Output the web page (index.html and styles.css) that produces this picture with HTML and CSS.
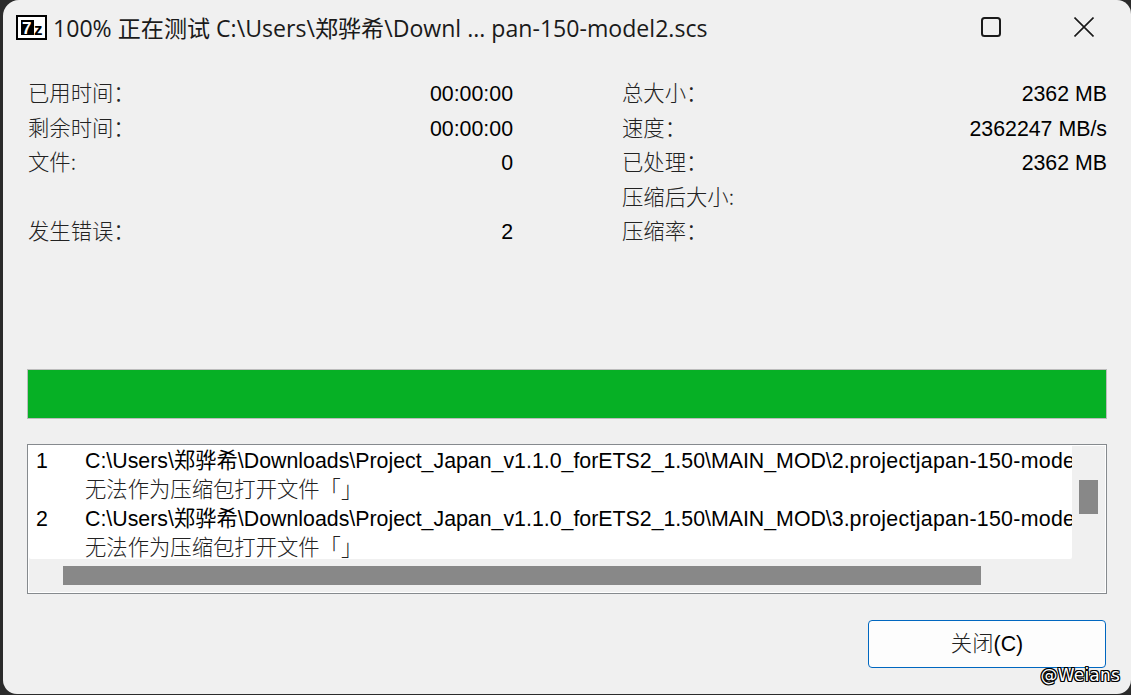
FILE: index.html
```html
<!DOCTYPE html>
<html lang="zh-CN">
<head>
<meta charset="utf-8">
<title>7-Zip</title>
<link rel="stylesheet" href="styles.css">
</head>
<body>
<div class="window">
  <header class="titlebar">
    <svg class="app-icon" width="32" height="26" viewBox="0 0 32 26">
      <rect x="0" y="0" width="31" height="25" fill="#000"/>
      <rect x="2" y="2" width="27" height="21" fill="#fff"/>
      <rect x="5" y="5" width="13" height="15" fill="#000"/>
      <text x="6" y="19" class="icon-seven">7</text>
      <text x="18" y="20" class="icon-z">z</text>
    </svg>
    <div class="title">100% 正在测试 C:\Users\郑骅希\Downl ... pan-150-model2.scs</div>
    <div class="controls">
      <svg class="control" width="20" height="20" viewBox="0 0 20 20"><rect x="1" y="1" width="18" height="18" rx="2.5" fill="none" stroke="#1a1a1a" stroke-width="2"/></svg>
      <svg class="control" width="20" height="20" viewBox="0 0 20 20"><path d="M0.5 0.5L19.5 19.5M19.5 0.5L0.5 19.5" fill="none" stroke="#1a1a1a" stroke-width="1.6"/></svg>
    </div>
  </header>
  <main class="content">
    <section class="stats">
      <div class="stat-col">
        <div class="stat"><span class="cjk">已用时间：</span><span>00:00:00</span></div>
        <div class="stat"><span class="cjk">剩余时间：</span><span>00:00:00</span></div>
        <div class="stat"><span class="cjk">文件:</span><span>0</span></div>
        <div class="stat"></div>
        <div class="stat"><span class="cjk">发生错误：</span><span>2</span></div>
      </div>
      <div class="stat-col">
        <div class="stat"><span class="cjk">总大小：</span><span>2362 MB</span></div>
        <div class="stat"><span class="cjk">速度：</span><span>2362247 MB/s</span></div>
        <div class="stat"><span class="cjk">已处理：</span><span>2362 MB</span></div>
        <div class="stat"><span class="cjk">压缩后大小:</span></div>
        <div class="stat"><span class="cjk">压缩率：</span></div>
      </div>
    </section>
    <div class="progress"><div class="progress-fill"></div></div>
    <section class="log">
      <div class="log-main">
        <div class="log-view">
          <div class="log-row"><span class="log-num">1</span><span class="log-text">C:\Users\郑骅希\Downloads\Project_Japan_v1.1.0_forETS2_1.50\MAIN_MOD\2.<span class="log-tail">projectjapan-150-model2.scs</span></span></div>
          <div class="log-row log-row-msg"><span class="log-num"></span><span class="log-text cjk">无法作为压缩包打开文件「」</span></div>
          <div class="log-row"><span class="log-num">2</span><span class="log-text">C:\Users\郑骅希\Downloads\Project_Japan_v1.1.0_forETS2_1.50\MAIN_MOD\3.<span class="log-tail">projectjapan-150-model2.scs</span></span></div>
          <div class="log-row log-row-msg"><span class="log-num"></span><span class="log-text cjk">无法作为压缩包打开文件「」</span></div>
        </div>
        <div class="vscroll"><div class="vthumb"></div></div>
      </div>
      <div class="hscroll"><div class="hthumb"></div></div>
    </section>
    <div class="actions"><button class="close-btn"><span class="cjk">关闭</span>(C)</button></div>
  </main>
  <div class="watermark">@Weians</div>
</div>
</body>
</html>
```

FILE: styles.css
```css
* { box-sizing: border-box; }
html, body { margin: 0; height: 100%; overflow: hidden; background: #2b2b2b; }
.window {
  position: relative;
  width: 1128px;
  height: 694px;
  margin-left: 3px;
  border-radius: 16px 14px 14px 14px;
  background: #f0f0f0;
  display: flex;
  flex-direction: column;
  font-family: "Liberation Sans", "Noto Sans CJK SC", sans-serif;
  font-size: 21.33px;
  line-height: 24px;
  color: #000;
  overflow: hidden;
}
.titlebar {
  height: 56px;
  display: flex;
  align-items: center;
  padding-left: 13px;
  flex: none;
}
.app-icon { flex: none; margin-right: 5px; }
.icon-seven { font: bold 17px "Liberation Sans", sans-serif; fill: #fff; }
.icon-z { font: bold 17px "Liberation Sans", sans-serif; fill: #000; }
.title {
  font-family: "Open Sans", "Noto Sans CJK SC", sans-serif;
  font-size: 23.1px;
  line-height: 30px;
  color: #1a1a1a;
  white-space: nowrap;
  flex: 1;
  margin-bottom: 1px;
}
.controls { display: flex; gap: 73px; padding-right: 37px; margin-bottom: 2px; }
.control { display: block; }
.content { padding: 21px 21px 0 24px; flex: 1; display: flex; flex-direction: column; }
.stats { display: grid; grid-template-columns: 485px 485px; column-gap: 109px; margin-left: 1px; }
.stat { height: 34.5px; display: flex; justify-content: space-between; align-items: baseline; padding-top: 3px; white-space: nowrap; }
.cjk { font-family: "Noto Sans CJK SC", sans-serif; color: #222; font-weight: 300; }
.progress {
  height: 50px;
  margin-top: 119.5px;
  border: 1px solid #bcbcbc;
  background: #e6e6e6;
  width: 1080px;
}
.progress-fill { height: 100%; width: 100%; background: #06b025; }
.log {
  margin-top: 25px;
  width: 1080px;
  height: 150px;
  border: 1px solid #868a8e;
  background: #f0f0f0;
  box-shadow: inset 0 0 0 1px #fff;
  padding: 1px 1px;
  display: flex;
  flex-direction: column;
}
.log-main { display: flex; height: 113px; flex: none; }
.log-view { width: 1043px; background: #fff; overflow: hidden; border-radius: 0 0 2px 2px; }
.log-row { display: flex; height: 29px; align-items: baseline; padding-top: 3px; white-space: nowrap; }
.log-row-msg { padding-top: 1px; }
.log-num { width: 56px; flex: none; padding-left: 7px; }
.log-text { flex: none; }
.log-tail { letter-spacing: 0.3px; }
.vscroll { flex: 1; position: relative; }
.vthumb { width: 19px; height: 34px; background: #888; margin: 34px 0 0 7px; }
.hscroll { flex: 1; padding: 7px 0 0 34px; }
.hthumb { width: 918px; height: 19px; background: #888; }
.actions { display: flex; justify-content: flex-end; margin-top: 26px; width: 1079px; }
.close-btn {
  width: 238px;
  height: 48px;
  border: 1px solid #0067c0;
  border-radius: 4px;
  background: #fdfdfd;
  font: inherit;
  line-height: 24px;
  color: #000;
  padding: 0 0 2px;
}
.watermark {
  position: absolute;
  right: 11px;
  bottom: 9px;
  font-family: "DejaVu Sans", sans-serif;
  font-size: 17px;
  letter-spacing: 0.2px;
  color: #fff;
  line-height: 20px;
  text-shadow: 1px 0 0 #000, -1px 0 0 #000, 0 1px 0 #000, 0 -1px 0 #000, 1px 1px 0 #000, -1px -1px 0 #000, 1px -1px 0 #000, -1px 1px 0 #000;
}
```
